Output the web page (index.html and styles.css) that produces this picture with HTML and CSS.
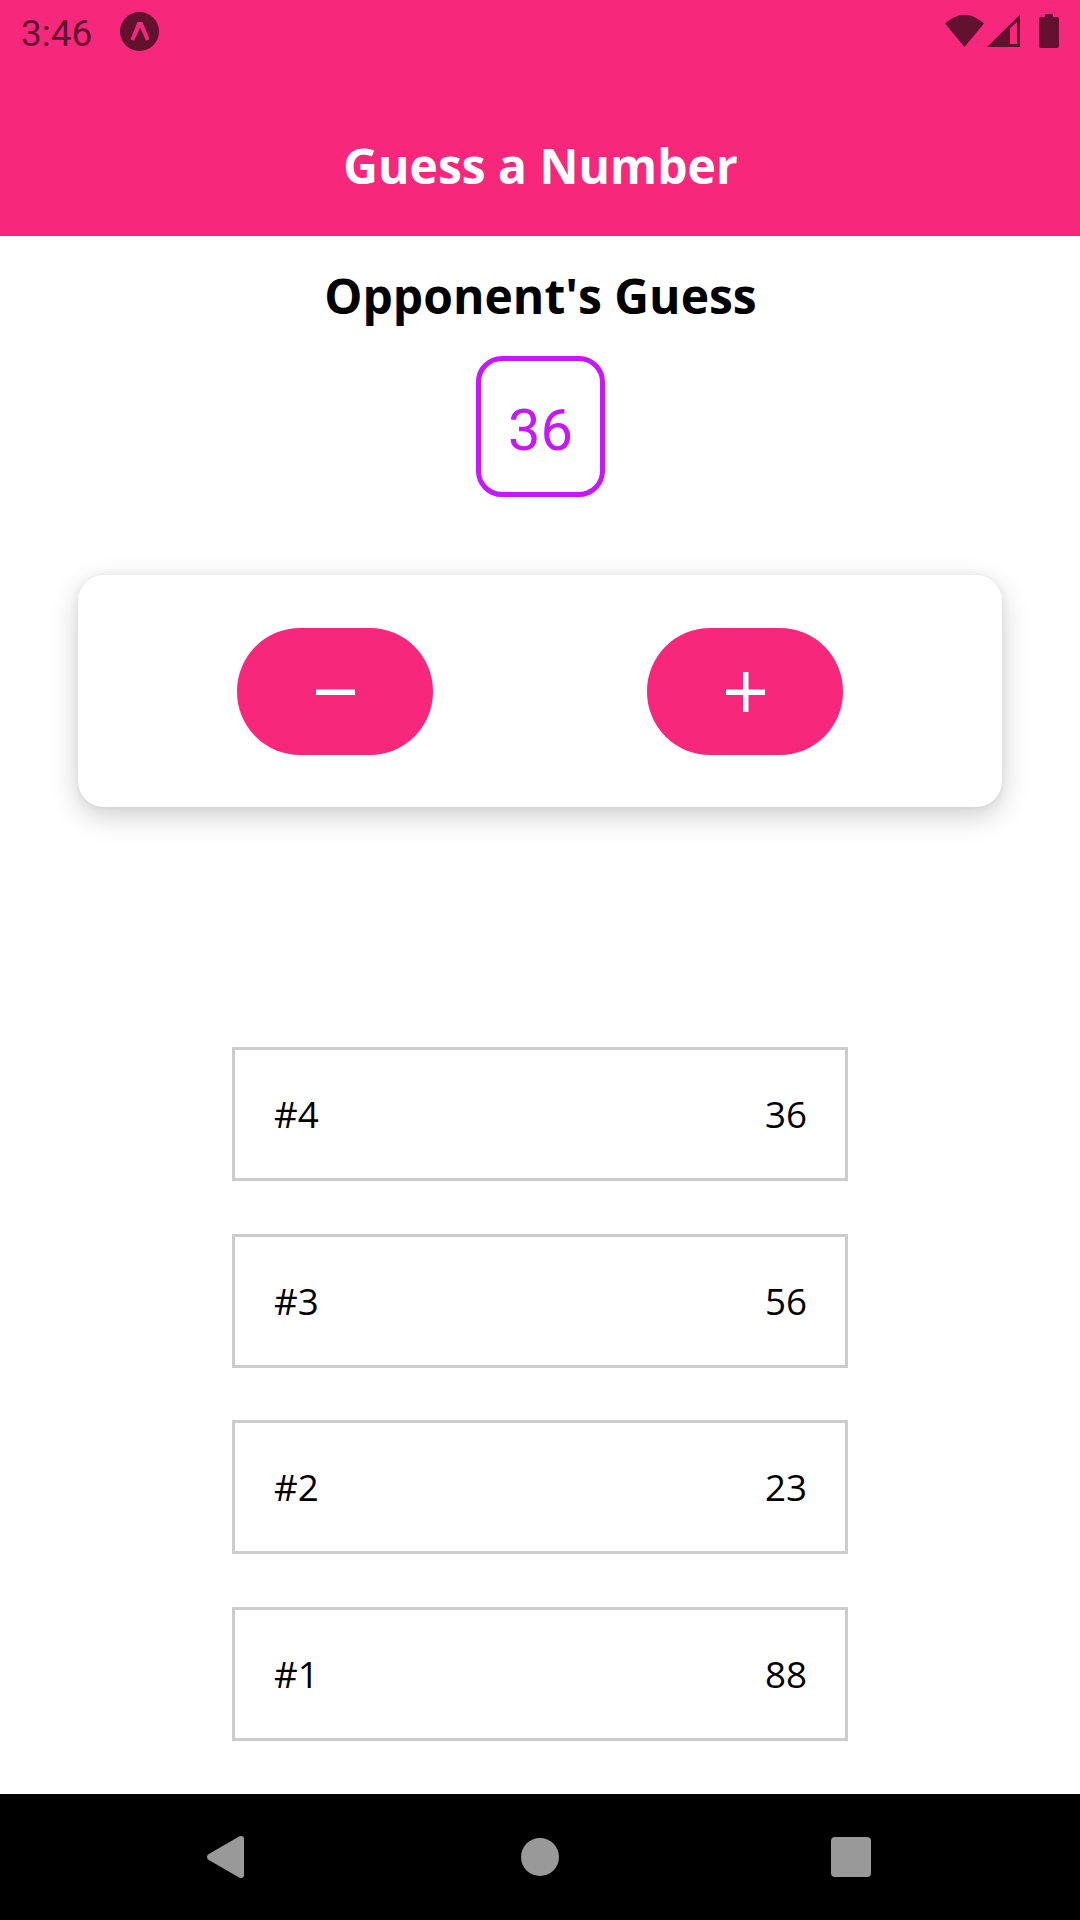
FILE: index.html
```html
<!DOCTYPE html>
<html lang="en">
<head>
<meta charset="utf-8">
<title>Guess a Number</title>
<link rel="stylesheet" href="styles.css">
</head>
<body>
<div class="screen">
  <header class="header">
    <div class="status-bar">
      <div class="status-left">
        <span class="clock">3:46</span>
        <svg class="expo" width="40" height="40" viewBox="0 0 40 40"><circle class="ink" cx="19.5" cy="19.5" r="19.5"/><path class="accent" d="M17.500 10h5l7 17.300-3.400 1.500L20.200 15.500 14 28.800l-3.500-1.500z"/></svg>
      </div>
      <svg class="status-icons" width="116" height="36" viewBox="0 0 116 36">
        <path class="ink" d="M0 9.500Q19.500-8 39 9.500L19.500 33z"/>
        <path class="ink" fill-rule="evenodd" d="M42 33L75 0.500v32.500zM65 30h7V8l-7 6.500z"/>
        <path class="ink" d="M100 0h8v3h4a2 2 0 0 1 2 2v27a2 2 0 0 1-2 2H96a2 2 0 0 1-2-2V5a2 2 0 0 1 2-2h4z"/>
      </svg>
    </div>
    <h1 class="title">Guess a Number</h1>
  </header>
  <main class="game">
    <h2 class="subtitle">Opponent's Guess</h2>
    <div class="number">36</div>
    <div class="card">
      <button class="btn" aria-label="Lower"><svg width="40" height="41" viewBox="-1 -1 40 41"><path class="sign" d="M0 17.500h39v5.500H0z"/></svg></button>
      <button class="btn" aria-label="Greater"><svg width="40" height="41" viewBox="-1 -1 40 41"><path class="sign" d="M0 17.500h17V0h5.500v17.500H39V23H22.500v17H17V23H0z"/></svg></button>
    </div>
    <ul class="guesses">
      <li class="guess"><span>#4</span><span>36</span></li>
      <li class="guess"><span>#3</span><span>56</span></li>
      <li class="guess"><span>#2</span><span>23</span></li>
      <li class="guess"><span>#1</span><span>88</span></li>
    </ul>
  </main>
  <nav class="nav">
    <svg width="1080" height="126" viewBox="0 0 1080 126">
      <path class="nav-icon" d="M208 60.500L239.500 42.300Q244 41 244 45V81Q244 85 239.500 83.700L208 65.500Q206 63 208 60.500z"/>
      <circle class="nav-icon" cx="540" cy="63" r="19"/>
      <rect class="nav-icon" x="831" y="43" width="40" height="40" rx="4"/>
    </svg>
  </nav>
</div>
</body>
</html>
```
FILE: styles.css
```css
* { box-sizing: border-box; }
body { margin: 0; background: #fff; font-family: "Open Sans", sans-serif; color: #000; }
.screen { width: 1080px; height: 1920px; display: flex; flex-direction: column; overflow: hidden; }
.header { height: 236px; flex: none; background: #f7287b; }
.status-bar { height: 63px; display: flex; justify-content: space-between; padding: 0 19px 0 21px; }
.status-left { display: flex; }
.clock { width: 99px; font: 37px/43px Roboto, sans-serif; color: #62112f; padding-top: 12px; }
.expo { margin-top: 12px; }
.status-icons { margin-top: 14px; overflow: visible; }
.ink { fill: #62112f; }
.accent { fill: #f7287b; }
.title, .subtitle { margin: 0; padding-left: 1px; font-size: 48px; line-height: 65px; font-weight: 700; text-align: center; }
.title { color: #fff; padding-top: 70px; }
.game { flex: 1; display: flex; flex-direction: column; align-items: center; }
.subtitle { margin-top: 27px; }
.number { width: 129px; height: 141px; margin-top: 28px; border: 5px solid #c717fc; border-radius: 26px; display: flex; align-items: center; justify-content: center; font: 57.75px/68px Roboto, sans-serif; color: #c717fc; padding: 6px 0 0 1px; }
.card { width: 924px; height: 232px; margin-top: 78px; border-radius: 26px; padding: 0 52px; background: #fff; display: flex; align-items: center; justify-content: space-around; box-shadow: 0 9px 28px rgba(0, 0, 0, .19), 0 0 10px rgba(0, 0, 0, .06); }
.btn { width: 196px; height: 127px; border: 0; border-radius: 63px; padding: 0; background: #f7287b; display: flex; align-items: center; justify-content: center; }
.sign { fill: #fff; }
.guesses { list-style: none; width: 616px; margin: 240px 0 0; padding: 0; display: flex; flex-direction: column; gap: 52.6px; }
.guess { height: 134px; border: 3px solid #ccc; padding: 0 38px 0 39px; display: flex; align-items: center; justify-content: space-between; font-size: 36.75px; line-height: 50px; }
.nav { height: 126px; flex: none; background: #000; }
.nav svg { display: block; }
.nav-icon { fill: #999; }
```
